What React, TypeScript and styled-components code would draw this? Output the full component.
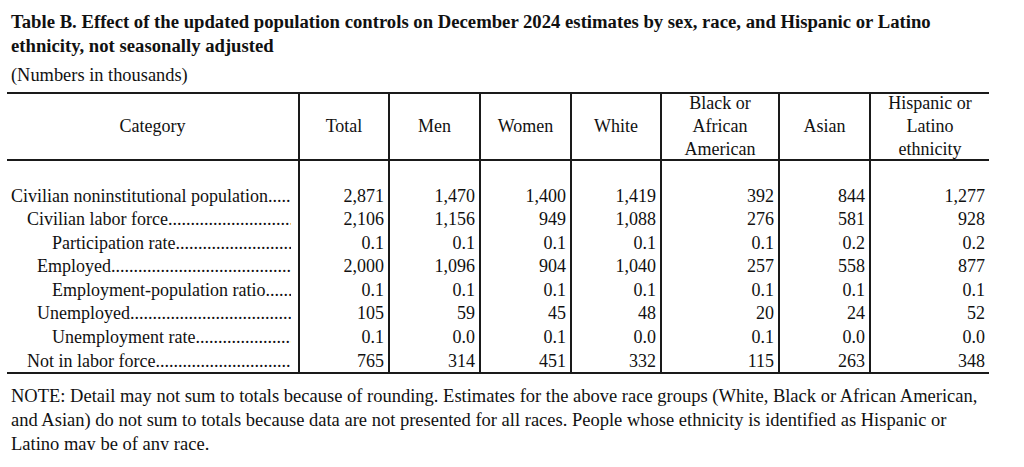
import React from "react";
import styled, { createGlobalStyle } from "styled-components";

const GlobalStyle = createGlobalStyle`
  html, body {
    margin: 0;
    padding: 0;
    background: #ffffff;
  }
`;

type Row = {
  label: string;
  level: number;
  values: string[];
};

const columns = [
  "Category",
  "Total",
  "Men",
  "Women",
  "White",
  "Black or African American",
  "Asian",
  "Hispanic or Latino ethnicity",
];

const widths = [291, 90, 91, 91, 90, 118, 91, 120];

const indents = [4, 20, 30, 45];

const rows: Row[] = [
  {
    label: "Civilian noninstitutional population",
    level: 0,
    values: ["2,871", "1,470", "1,400", "1,419", "392", "844", "1,277"],
  },
  {
    label: "Civilian labor force",
    level: 1,
    values: ["2,106", "1,156", "949", "1,088", "276", "581", "928"],
  },
  {
    label: "Participation rate",
    level: 3,
    values: ["0.1", "0.1", "0.1", "0.1", "0.1", "0.2", "0.2"],
  },
  {
    label: "Employed",
    level: 2,
    values: ["2,000", "1,096", "904", "1,040", "257", "558", "877"],
  },
  {
    label: "Employment-population ratio",
    level: 3,
    values: ["0.1", "0.1", "0.1", "0.1", "0.1", "0.1", "0.1"],
  },
  {
    label: "Unemployed",
    level: 2,
    values: ["105", "59", "45", "48", "20", "24", "52"],
  },
  {
    label: "Unemployment rate",
    level: 3,
    values: ["0.1", "0.0", "0.1", "0.0", "0.1", "0.0", "0.0"],
  },
  {
    label: "Not in labor force",
    level: 1,
    values: ["765", "314", "451", "332", "115", "263", "348"],
  },
];

const App = () => {
  return (
    <Page>
      <GlobalStyle />
      <Title>
        Table B. Effect of the updated population controls on December 2024
        estimates by sex, race, and Hispanic or Latino ethnicity, not
        seasonally adjusted
      </Title>
      <Units>(Numbers in thousands)</Units>
      <Grid $cols={widths}>
        {columns.map((c, i) => (
          <HeadCell key={c} $first={i === 0}>
            {c}
          </HeadCell>
        ))}
        {widths.map((_, i) => (
          <Spacer key={i} $first={i === 0} />
        ))}
        {rows.map((r, ri) => (
          <React.Fragment key={r.label}>
            <LabelCell $indent={indents[r.level]} $last={ri === rows.length - 1}>
              <span>{r.label}</span>
              <Leader>
                ............................................................
              </Leader>
            </LabelCell>
            {r.values.map((v, i) => (
              <NumCell key={i} $last={ri === rows.length - 1}>
                {v}
              </NumCell>
            ))}
          </React.Fragment>
        ))}
      </Grid>
      <Note>
        NOTE: Detail may not sum to totals because of rounding. Estimates for
        the above race groups (White, Black or African American, and Asian) do
        not sum to totals because data are not presented for all races. People
        whose ethnicity is identified as Hispanic or Latino may be of any race.
      </Note>
    </Page>
  );
};

const line = "#1a1a1a";

const Page = styled.div`
  width: 1024px;
  height: 467px;
  overflow: hidden;
  box-sizing: border-box;
  padding: 10px 0 0 7px;
  font-family: "Liberation Serif", "Times New Roman", serif;
  font-size: 18px;
  color: #111111;
`;

const Title = styled.div`
  padding-left: 4px;
  width: 945px;
  font-size: 18.7px;
  font-weight: bold;
  line-height: 24px;
`;

const Units = styled.div`
  margin-top: 5px;
  padding-left: 4px;
  font-size: 18.4px;
  line-height: 24px;
`;

const Grid = styled.div<{ $cols: number[] }>`
  margin-top: 5px;
  display: grid;
  grid-template-columns: ${(p) => p.$cols.map((w) => `${w}px`).join(" ")};
  width: 982px;
  border-top: 2px solid ${line};
`;

const HeadCell = styled.div<{ $first: boolean }>`
  box-sizing: border-box;
  height: 67px;
  display: flex;
  align-items: center;
  justify-content: center;
  text-align: center;
  line-height: 23px;
  padding: 0 12px;
  border-bottom: 2px solid ${line};
  border-left: ${(p) => (p.$first ? "none" : `2px solid ${line}`)};
`;

const Spacer = styled.div<{ $first: boolean }>`
  height: 23.5px;
  border-left: ${(p) => (p.$first ? "none" : `2px solid ${line}`)};
`;

const LabelCell = styled.div<{ $indent: number; $last: boolean }>`
  box-sizing: border-box;
  display: flex;
  white-space: nowrap;
  height: ${(p) => (p.$last ? "24.5px" : "23.6px")};
  line-height: 23.6px;
  padding-left: ${(p) => p.$indent}px;
  padding-right: 7px;
  border-bottom: ${(p) => (p.$last ? `2px solid ${line}` : "none")};
`;

const Leader = styled.span`
  flex: 1;
  overflow: hidden;
  min-width: 0;
`;

const NumCell = styled.div<{ $last: boolean }>`
  box-sizing: border-box;
  height: ${(p) => (p.$last ? "24.5px" : "23.6px")};
  line-height: 23.6px;
  text-align: right;
  padding-right: 4px;
  border-left: 2px solid ${line};
  border-bottom: ${(p) => (p.$last ? `2px solid ${line}` : "none")};
`;

const Note = styled.div`
  margin-top: 10px;
  padding-left: 4px;
  width: 976px;
  font-size: 18.5px;
  line-height: 24px;
  height: 66px;
  overflow: hidden;
`;

export default App;
